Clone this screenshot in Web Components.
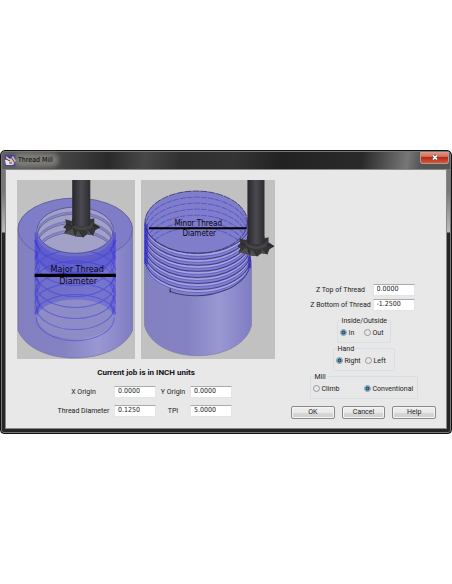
<!DOCTYPE html>
<html lang="en">
<head>
<meta charset="utf-8">
<title>Thread Mill</title>
<style>
body { margin: 0; padding: 150px 0; background: #fff; color: #222; font: 7px/10px Roboto, "Liberation Sans", sans-serif; }
</style>
</head>
<body>
<thread-mill-app></thread-mill-app>
<script>
const define = (name, markup, setup) => {
  const t = document.createElement('template');
  t.innerHTML = markup;
  customElements.define(name, class extends HTMLElement {
    constructor() {
      super();
      this.attachShadow({ mode: 'open' }).append(t.content.cloneNode(true));
    }
    connectedCallback() { if (setup) setup(this, this.shadowRoot); }
  });
};

define('app-window', `
<style>
:host { display: block; box-sizing: border-box; padding: 1px 5px 5px; border: 1px solid #111; border-radius: 5px 5px 4px 4px;
  background: linear-gradient(100deg, #606060 0, #555 8%, #2a2a2a 24%, #484848 32%, #303030 40%, #343434 52%, #222 62%, #2a2a2a 80%, #777 90%, #555 93%) top / 100% 18px no-repeat,
    linear-gradient(#777 0, #777 40px, #bbb 81px, #252525 82px);
  box-shadow: inset 0 0 0 1px #777; }
header { display: flex; align-items: flex-start; height: 17px; }
h1 { margin: 0; padding: 3px 0 0 1px; font: 7px/10px "DejaVu Sans Condensed", sans-serif; color: #080808; flex: 1; }
h1 span { padding: 0 3px 0 1px; border-radius: 6px; background: #8f8d87aa; box-shadow: 0 0 4px 3px #8f8d87aa; }
.icon { width: 11px; height: 11px; margin: 3px 0 0 -1px; }
button { display: grid; place-items: center; width: 29px; height: 12px; padding: 0; margin-right: -3px; border: 1px solid #b09a96; border-top: 0; border-radius: 0 0 3px 3px; background: linear-gradient(#e09a8a, #d06a55 45%, #b52a12 50%, #d8563a); }
main { border: 1px solid #888; margin: 0 -1px -1px; background: #e8e8e8; }
</style>
<header>
<svg class="icon" viewBox="0 0 11 11" aria-hidden="true"><rect width="11" height="11" fill="#4140a0"/><path d="M1 1l4 3 3-3 3 5-3 4-6 0z" fill="#e7c6b5"/><path d="M0 5l3-1 2 3 3 1-2 2H1z" fill="#e9e6ee"/><path d="M1 4l4 2M6 2l4 6M4 8h3" stroke="#523449" fill="none"/></svg>
<h1><span><slot name="title"></slot></span></h1>
<button aria-label="Close"><svg width="8" height="7" viewBox="0 0 8 7"><path d="M2 1.5l4 4M6 1.5l-4 4" stroke="#555" stroke-width="3"/><path d="M2 1.5l4 4M6 1.5l-4 4" stroke="#fff" stroke-width="1.6"/></svg></button>
</header>
<main><slot></slot></main>`);

define('number-field', `
<style>
:host { display: contents; }
label { text-align: center; white-space: nowrap; }
input { box-sizing: border-box; width: 42px; height: 12px; padding: 0 3px 1px; border: 1px solid #e2e4e8; border-top-color: #aaa; background: #fff; color: inherit; font: inherit; font-family: "DejaVu Sans Condensed", sans-serif; line-height: 10px; }
</style>
<label for="f"></label><input id="f" type="text">`, (host, root) => {
  root.querySelector('label').textContent = host.getAttribute('label');
  root.querySelector('input').value = host.getAttribute('value');
});

define('radio-group', `
<style>
:host { display: block; }
fieldset { box-sizing: border-box; height: 26px; margin: 0; padding: 3px 2px 0; border: 1px solid #d5dfe5; border-radius: 2px; min-width: 0; }
legend { padding: 0 1px; margin-left: 1px; line-height: 8px; }
div { display: grid; grid-template-columns: 1fr var(--second, 24px); }
label { display: flex; align-items: center; gap: 2px; white-space: nowrap; }
input { appearance: none; flex: none; box-sizing: border-box; width: 7px; height: 7px; margin: 0; border: 1px solid #999; border-radius: 50%; background: #e8e8e8; }
input:checked { border-color: #8d979f; background: radial-gradient(circle, #36a0d0 0, #124d78 45%, #c5d5df 75%); }
</style>
<fieldset><legend></legend><div></div></fieldset>`, (host, root) => {
  root.querySelector('legend').textContent = host.getAttribute('label');
  const row = root.querySelector('div');
  row.replaceChildren(...host.getAttribute('options').split(',').map(name => {
    const label = document.createElement('label');
    const input = document.createElement('input');
    input.type = 'radio';
    input.name = 'choice';
    input.checked = name === host.getAttribute('value');
    label.append(input, name);
    return label;
  }));
});

define('push-button', `
<style>
:host { display: block; }
button { box-sizing: border-box; width: 100%; height: 13px; padding: 0; border: 1px solid #8a8a8a; border-radius: 2px; background: linear-gradient(#f0f0f0, #e8e8e8 50%, #d8d8d8 51%, #cfcfcf); box-shadow: inset 0 0 0 1px #f4f4f4; color: inherit; font: inherit; line-height: 10px; }
</style>
<button type="button"><slot></slot></button>`);

const fronts = (n, x0, x1, y, ry, step) => Array.from({ length: n }, (_, i) =>
  `<path d="M${x0} ${y + i * step}A${(x1 - x0) / 2} ${ry} 0 0 0 ${x1} ${y + i * step}"/>`).join('');
const backs = (n, x0, x1, y, ry, step) => Array.from({ length: n }, (_, i) =>
  `<path d="M${x0} ${y + i * step}A${(x1 - x0) / 2} ${ry} 0 0 1 ${x1} ${y + i * step}"/>`).join('');
const defs = `<defs>
<linearGradient id="body"><stop offset="0" stop-color="#8280c0"/><stop offset=".4" stop-color="#8482c2"/><stop offset=".7" stop-color="#9a98d2"/><stop offset="1" stop-color="#7f7dc4"/></linearGradient>
<linearGradient id="shaft"><stop offset="0" stop-color="#26262b"/><stop offset=".5" stop-color="#4a4a50"/><stop offset="1" stop-color="#2c2c31"/></linearGradient>
<clipPath id="rim"><ellipse cx="55" cy="42" rx="51" ry="31"/></clipPath>
<clipPath id="hole"><ellipse cx="58" cy="50" rx="38" ry="23"/></clipPath>
</defs>`;
const cutter = `<path d="M2 1L9 3 27 1 31 0 31 5 37 9 32 12 30 17 24 16 20 19 12 18 9 16 1 15 3 11 0 9 3 6z" fill="#353537"/>
<path d="M1 15l9-5 2 8zM12 18l3-7 5 8zM24 16l0-6 6 7z" fill="#4d4d4e"/>
<path d="M8 4q10 10 22 0v4q-10 8-22 0z" fill="#454548"/>
<path d="M3 6l6 2M10 10l2 7M15 12l5 7M24 11l6 6M29 7l7 2" stroke="#19191b" stroke-width=".6" fill="none"/>`;
const pictureStyle = `<style>
:host { display: block; }
svg { display: block; width: 100%; background: #c1c1c1; }
text { font-family: "DejaVu Sans Condensed", sans-serif; text-anchor: middle; fill: #08080f; }
</style>`;

define('inside-thread-picture', `${pictureStyle}
<svg viewBox="0 0 118 178" role="img" aria-label="Inside thread">${defs}
<path d="M1 49A57 31 0 0 1 115 49V150C100 185 18 188 1 150z" fill="url(#body)" stroke="#69699e" stroke-width=".6"/>
<ellipse cx="58" cy="49" rx="57" ry="31" fill="#7f7dc8" stroke="#55558f" stroke-width=".6"/>
<path d="M20 50V137A38 20 0 0 0 96 137V50z" fill="#6b69cc" opacity=".75"/>
<path d="M20 137A38 18 0 0 1 96 137 38 21 0 0 1 20 137z" fill="#8e8cc6"/>
<path d="M18 52Q24 76 58 76T98 52V78Q86 98 58 98T18 78z" fill="#4b48d2" opacity=".45"/>
<g fill="none" stroke="#3431df" stroke-width="1" opacity=".45">${backs(5, 18, 98, 90, 20, 11)}${fronts(8, 19, 97, 60, 23, 11)}</g>
<g fill="none" stroke="#2c29dc" stroke-width="3" opacity=".3"><path d="M19 52V134M97 52V134"/></g>
<g fill="none" stroke="#2421e0" stroke-width="1" opacity=".4"><path d="M17 60l6 9-5 9 5 9-5 9 5 9-5 9 5 9-3 9M99 60l-6 9 5 9-5 9 5 9-5 9 5 9-5 9 3 9"/></g>
<ellipse cx="58" cy="50" rx="38" ry="23" fill="#a2a1c8" stroke="#44447f" stroke-width=".7"/>
<g clip-path="url(#hole)" fill="none"><g stroke="#7f7dbe" stroke-width="2">${backs(3, 20, 96, 54, 22, 9)}</g><g stroke="#454488" stroke-width=".6">${backs(3, 20, 96, 56, 22, 9)}</g></g>
<rect x="55" width="18" height="47" fill="url(#shaft)"/>
<g transform="translate(46 38)">${cutter}</g>
<rect x="55" y="38" width="18" height="8" fill="url(#shaft)"/>
<path d="M17.500 95H98.500" stroke="#000" stroke-width="3"/>
<text x="60" y="92" font-size="9">Major Thread</text><text x="61" y="104" font-size="9">Diameter</text>
</svg>`);

define('outside-thread-picture', `${pictureStyle}
<svg viewBox="0 0 133 178" role="img" aria-label="Outside thread">${defs}
<path d="M3.500 80H110V145C100 184 15 186 3.500 145z" fill="url(#body)" stroke="#75759d" stroke-width=".6"/>
<path d="M4 42A51 31 0 0 1 106 42L110 82Q96 114 58 114T3 82z" fill="#8381cb"/>
<ellipse cx="55" cy="42" rx="51" ry="31" fill="#807ecb"/>
<g clip-path="url(#rim)" fill="none" stroke="#4542cf" stroke-width="1" opacity=".6" stroke-dasharray="6 1">${backs(6, 4, 106, 48, 31, 6)}</g>
<g fill="none" stroke="#a9a8dc" stroke-width="2">${fronts(7, 4, 109, 44, 31, 6)}</g>
<g fill="none" stroke="#3f3e84" stroke-width="1">${fronts(7, 4, 109, 42, 31, 6)}<path d="M29 111Q58 121 88 108 106 99 109 84"/></g>
<g fill="none" stroke="#4441d0" stroke-width="1" opacity=".6">${fronts(7, 4, 109, 45, 31, 6)}</g>
<path d="M5 44V84" stroke="#2522d5" stroke-width="4" opacity=".5"/>
<path d="M108 76V88" stroke="#2522a5" stroke-width="3" opacity=".5"/>
<ellipse cx="55" cy="42" rx="51" ry="31" fill="none" stroke="#333367" stroke-width=".8" stroke-dasharray="7 1"/>
<path d="M29 108v4" stroke="#222" stroke-width="1"/>
<rect x="106" width="17" height="65" fill="url(#shaft)"/>
<g transform="translate(96 57)">${cutter}</g>
<rect x="106" y="56" width="17" height="8" fill="url(#shaft)"/>
<path d="M8 48H105" stroke="#000" stroke-width="2"/>
<text x="57" y="46" font-size="8">Minor Thread</text><text x="58" y="56" font-size="8">Diameter</text>
</svg>`);

define('thread-mill-app', `
<style>
:host { display: block; }
.panes { display: flex; justify-content: space-between; padding: 10px 10px 9px 11px; }
.left { flex: 0 1 258px; padding-bottom: 2px; }
.pictures { display: grid; grid-template-columns: 118fr 133fr; gap: 6px; }
h2 { margin: 9px 0 8px; font: bold 8px/10px Roboto, "Liberation Sans", sans-serif; text-align: center; color: #111; }
.origin { display: grid; grid-template-columns: 61px 42px 34px 42px; gap: 7px 0; align-items: center; padding-left: 36px; }
.right { flex: 0 1 145px; display: flex; flex-direction: column; justify-content: flex-end; align-items: center; }
.depth { display: grid; grid-template-columns: 64px 42px; gap: 3px 0; align-items: center; margin: 0 4px 6px 0; }
.side { width: 54px; }
.hand { width: 62px; --second: 27px; }
.mill { width: 108px; --second: 51px; }
.groups { display: grid; justify-items: center; gap: 2px; }
.buttons { display: grid; grid-template-columns: repeat(3, 1fr); gap: 7px; align-self: stretch; margin-top: 7px; }
</style>
<app-window><span slot="title">Thread Mill</span>
<div class="panes">
<section class="left">
<div class="pictures"><inside-thread-picture></inside-thread-picture><outside-thread-picture></outside-thread-picture></div>
<h2>Current job is in INCH units</h2>
<div class="origin">
<number-field label="X Origin" value="0.0000"></number-field><number-field label="Y Origin" value="0.0000"></number-field>
<number-field label="Thread Diameter" value="0.1250"></number-field><number-field label="TPI" value="5.0000"></number-field>
</div>
</section>
<section class="right">
<div class="depth"><number-field label="Z Top of Thread" value="0.0000"></number-field><number-field label="Z Bottom of Thread" value="-1.2500"></number-field></div>
<div class="groups">
<radio-group class="side" label="Inside/Outside" options="In,Out" value="In"></radio-group>
<radio-group class="hand" label="Hand" options="Right,Left" value="Right"></radio-group>
<radio-group class="mill" label="Mill" options="Climb,Conventional" value="Conventional"></radio-group>
</div>
<div class="buttons"><push-button>OK</push-button><push-button>Cancel</push-button><push-button>Help</push-button></div>
</section>
</div>
</app-window>`);
</script>
</body>
</html>
